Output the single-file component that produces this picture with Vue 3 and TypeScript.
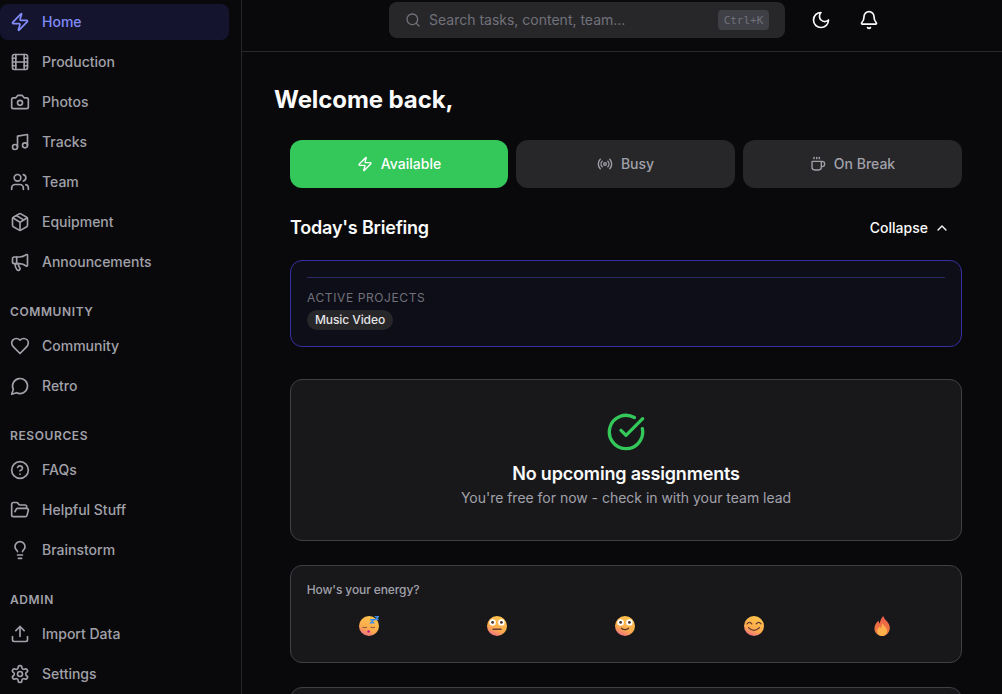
<script setup lang="ts">
import { h } from 'vue'

const circle = (cx: number, cy: number, r: number) =>
  `M${cx - r} ${cy}a${r} ${r} 0 1 0 ${r * 2} 0a${r} ${r} 0 1 0 ${-r * 2} 0z`

const paths: Record<string, string[]> = {
  zap: ['M4 14a1 1 0 0 1-.78-1.63l9.9-10.2a.5.5 0 0 1 .86.46l-1.92 6.02A1 1 0 0 0 13 10h7a1 1 0 0 1 .78 1.63l-9.9 10.2a.5.5 0 0 1-.86-.46l1.92-6.02A1 1 0 0 0 11 14z'],
  film: ['M5 3h14a2 2 0 0 1 2 2v14a2 2 0 0 1-2 2H5a2 2 0 0 1-2-2V5a2 2 0 0 1 2-2z', 'M7 3v18', 'M3 7.5h4', 'M3 12h18', 'M3 16.5h4', 'M17 3v18', 'M17 7.5h4', 'M17 16.5h4'],
  camera: ['M14.5 4h-5L7 7H4a2 2 0 0 0-2 2v9a2 2 0 0 0 2 2h16a2 2 0 0 0 2-2V9a2 2 0 0 0-2-2h-3l-2.5-3z', circle(12, 13, 3)],
  music: ['M9 18V5l12-2v13', circle(6, 18, 3), circle(18, 16, 3)],
  users: ['M16 21v-2a4 4 0 0 0-4-4H6a4 4 0 0 0-4 4v2', circle(9, 7, 4), 'M22 21v-2a4 4 0 0 0-3-3.87', 'M16 3.13a4 4 0 0 1 0 7.75'],
  box: ['M11 21.73a2 2 0 0 0 2 0l7-4A2 2 0 0 0 21 16V8a2 2 0 0 0-1-1.73l-7-4a2 2 0 0 0-2 0l-7 4A2 2 0 0 0 3 8v8a2 2 0 0 0 1 1.73z', 'M12 22V12', 'm3.3 7 7.703 4.734a2 2 0 0 0 1.994 0L20.7 7', 'm7.5 4.27 9 5.15'],
  megaphone: ['M11 6a13 13 0 0 0 8.4-2.8A1 1 0 0 1 21 4v12a1 1 0 0 1-1.6.8A13 13 0 0 0 11 14H5a2 2 0 0 1-2-2V8a2 2 0 0 1 2-2z', 'M6 14a12 12 0 0 0 2.4 7.2 2 2 0 0 0 3.2-2.4A8 8 0 0 1 10 14', 'M8 6v8'],
  heart: ['M19 14c1.49-1.46 3-3.21 3-5.5A5.5 5.5 0 0 0 16.5 3c-1.76 0-3 .5-4.5 2-1.5-1.5-2.74-2-4.5-2A5.5 5.5 0 0 0 2 8.5c0 2.3 1.5 4.05 3 5.5l7 7Z'],
  message: ['M7.9 20A9 9 0 1 0 4 16.1L2 22Z'],
  help: [circle(12, 12, 10), 'M9.09 9a3 3 0 0 1 5.83 1c0 2-3 3-3 3', 'M12 17h.01'],
  folder: ['m6 14 1.5-2.9A2 2 0 0 1 9.24 10H20a2 2 0 0 1 1.94 2.5l-1.54 6a2 2 0 0 1-1.95 1.5H4a2 2 0 0 1-2-2V5a2 2 0 0 1 2-2h3.9a2 2 0 0 1 1.69.9l.81 1.2a2 2 0 0 0 1.67.9H18a2 2 0 0 1 2 2v2'],
  bulb: ['M15 14c.2-1 .7-1.7 1.5-2.5 1-.9 1.5-2.2 1.5-3.5A6 6 0 0 0 6 8c0 1 .2 2.2 1.5 3.5.7.7 1.3 1.5 1.5 2.5', 'M9 18h6', 'M10 22h4'],
  upload: ['M21 15v4a2 2 0 0 1-2 2H5a2 2 0 0 1-2-2v-4', 'M17 8l-5-5-5 5', 'M12 3v12'],
  settings: ['M12.22 2h-.44a2 2 0 0 0-2 2v.18a2 2 0 0 1-1 1.73l-.43.25a2 2 0 0 1-2 0l-.15-.08a2 2 0 0 0-2.73.73l-.22.38a2 2 0 0 0 .73 2.73l.15.1a2 2 0 0 1 1 1.72v.51a2 2 0 0 1-1 1.74l-.15.09a2 2 0 0 0-.73 2.73l.22.38a2 2 0 0 0 2.73.73l.15-.08a2 2 0 0 1 2 0l.43.25a2 2 0 0 1 1 1.73V20a2 2 0 0 0 2 2h.44a2 2 0 0 0 2-2v-.18a2 2 0 0 1 1-1.73l.43-.25a2 2 0 0 1 2 0l.15.08a2 2 0 0 0 2.73-.73l.22-.39a2 2 0 0 0-.73-2.73l-.15-.08a2 2 0 0 1-1-1.74v-.5a2 2 0 0 1 1-1.74l.15-.09a2 2 0 0 0 .73-2.73l-.22-.38a2 2 0 0 0-2.73-.73l-.15.08a2 2 0 0 1-2 0l-.43-.25a2 2 0 0 1-1-1.73V4a2 2 0 0 0-2-2z', circle(12, 12, 3)],
  search: [circle(11, 11, 8), 'm21 21-4.3-4.3'],
  moon: ['M12 3a6 6 0 0 0 9 9 9 9 0 1 1-9-9Z'],
  bell: ['M10.268 21a2 2 0 0 0 3.464 0', 'M3.262 15.326A1 1 0 0 0 4 17h16a1 1 0 0 0 .74-1.673C19.41 13.956 18 12.499 18 8A6 6 0 0 0 6 8c0 4.499-1.411 5.956-2.738 7.326'],
  radio: ['M4.9 19.1C1 15.2 1 8.8 4.9 4.9', 'M7.8 16.2c-2.3-2.3-2.3-6.1 0-8.5', circle(12, 12, 2), 'M16.2 7.8c2.3 2.3 2.3 6.1 0 8.5', 'M19.1 4.9C23 8.8 23 15.1 19.1 19'],
  coffee: ['M10 2v2', 'M14 2v2', 'M16 8a1 1 0 0 1 1 1v8a4 4 0 0 1-4 4H7a4 4 0 0 1-4-4V9a1 1 0 0 1 1-1h14a4 4 0 1 1 0 8h-1', 'M6 2v2'],
  chevron: ['m18 15-6-6-6 6'],
  check: ['M21.801 10A10 10 0 1 1 17 3.335', 'm9 11 3 3L22 4'],
}

const Icon = (props: { name: string; size?: number }) =>
  h(
    'svg',
    {
      width: props.size ?? 20,
      height: props.size ?? 20,
      viewBox: '0 0 24 24',
      fill: 'none',
      stroke: 'currentColor',
      'stroke-width': 2,
      'stroke-linecap': 'round',
      'stroke-linejoin': 'round',
      style: 'flex:none;display:block',
    },
    paths[props.name].map((d) => h('path', { d })),
  )
Icon.props = ['name', 'size']

const groups = [
  {
    label: '',
    items: [
      { name: 'Home', icon: 'zap', active: true },
      { name: 'Production', icon: 'film' },
      { name: 'Photos', icon: 'camera' },
      { name: 'Tracks', icon: 'music' },
      { name: 'Team', icon: 'users' },
      { name: 'Equipment', icon: 'box' },
      { name: 'Announcements', icon: 'megaphone' },
    ],
  },
  {
    label: 'Community',
    items: [
      { name: 'Community', icon: 'heart' },
      { name: 'Retro', icon: 'message' },
    ],
  },
  {
    label: 'Resources',
    items: [
      { name: 'FAQs', icon: 'help' },
      { name: 'Helpful Stuff', icon: 'folder' },
      { name: 'Brainstorm', icon: 'bulb' },
    ],
  },
  {
    label: 'Admin',
    items: [
      { name: 'Import Data', icon: 'upload' },
      { name: 'Settings', icon: 'settings' },
    ],
  },
]

const statuses = [
  { name: 'Available', icon: 'zap', on: true },
  { name: 'Busy', icon: 'radio' },
  { name: 'On Break', icon: 'coffee' },
]
</script>

<template>
  <div class="app">
    <aside class="sidebar">
      <section v-for="(g, i) in groups" :key="i" class="group">
        <h3 v-if="g.label" class="group-label">{{ g.label }}</h3>
        <a v-for="it in g.items" :key="it.name" class="nav-item" :class="{ active: it.active }">
          <Icon :name="it.icon" />
          <span>{{ it.name }}</span>
        </a>
      </section>
    </aside>

    <div class="right">
      <header class="topbar">
        <div class="search">
          <Icon name="search" :size="16" class="search-icon" />
          <span class="search-text">Search tasks, content, team...</span>
          <kbd class="kbd">Ctrl+K</kbd>
        </div>
        <button class="icon-btn"><Icon name="moon" /></button>
        <button class="icon-btn"><Icon name="bell" /></button>
      </header>

      <main class="main">
        <h1 class="welcome">Welcome back,</h1>
        <div class="inner">
          <div class="statuses">
            <button v-for="s in statuses" :key="s.name" class="status" :class="{ on: s.on }">
              <Icon :name="s.icon" :size="16" />
              <span>{{ s.name }}</span>
            </button>
          </div>

          <div class="brief-head">
            <h2 class="brief-title">Today's Briefing</h2>
            <button class="collapse">
              <span>Collapse</span>
              <Icon name="chevron" :size="16" />
            </button>
          </div>

          <div class="brief-card">
            <div class="brief-rule"></div>
            <div class="brief-label">ACTIVE PROJECTS</div>
            <span class="chip">Music Video</span>
          </div>

          <div class="card empty">
            <Icon name="check" :size="40" class="empty-icon" />
            <h3 class="empty-title">No upcoming assignments</h3>
            <p class="empty-sub">You're free for now - check in with your team lead</p>
          </div>

          <div class="card energy">
            <div class="energy-label">How's your energy?</div>
            <div class="emojis">
              <svg class="emoji" viewBox="0 0 20 20" aria-label="sleepy">
                <defs>
                  <linearGradient id="face" x1="0.7" y1="0" x2="0.25" y2="1">
                    <stop offset="0" stop-color="#ffc54c" />
                    <stop offset="0.65" stop-color="#fca94e" />
                    <stop offset="1" stop-color="#ec6a86" />
                  </linearGradient>
                  <linearGradient id="fire" x1="0.5" y1="0" x2="0.5" y2="1">
                    <stop offset="0" stop-color="#ee5a4a" />
                    <stop offset="1" stop-color="#f0843e" />
                  </linearGradient>
                </defs>
                <circle cx="10" cy="10" r="10" fill="url(#face)" />
                <path d="M3.400 11.200q2.400.9 4.600 0M11.400 11.200q2.400.9 4.600 0" stroke="#7a4c3c" stroke-width=".9" fill="none" />
                <circle cx="9.600" cy="15.500" r="1.300" fill="#c2188a" />
                <path d="M11 3.800h3.800l-3 3h3.600M15.600 .4h4l-3 3.200h3" stroke="#3f8ee8" stroke-width="1.500" fill="none" />
              </svg>
              <svg class="emoji" viewBox="0 0 20 20" aria-label="flat">
                <circle cx="10" cy="10" r="10" fill="url(#face)" />
                <circle cx="5.600" cy="6.400" r="3.200" fill="#fff" />
                <circle cx="14.400" cy="6.400" r="3.200" fill="#fff" />
                <circle cx="5.600" cy="6.400" r="1.400" fill="#4a3028" />
                <circle cx="14.400" cy="6.400" r="1.400" fill="#4a3028" />
                <rect x="5.400" y="12.400" width="9.200" height="1.600" rx=".6" fill="#6b4238" />
              </svg>
              <svg class="emoji" viewBox="0 0 20 20" aria-label="okay">
                <circle cx="10" cy="10" r="10" fill="url(#face)" />
                <circle cx="5.600" cy="6.400" r="3.200" fill="#fff" />
                <circle cx="14.400" cy="6.400" r="3.200" fill="#fff" />
                <circle cx="5.600" cy="6.400" r="1.400" fill="#4a3028" />
                <circle cx="14.400" cy="6.400" r="1.400" fill="#4a3028" />
                <path d="M6.400 12.200q3.600 3 7.200 0" stroke="#5a382e" stroke-width="1.300" fill="none" stroke-linecap="round" />
              </svg>
              <svg class="emoji" viewBox="0 0 20 20" aria-label="smiling">
                <circle cx="10" cy="10" r="10" fill="url(#face)" />
                <path d="M3 7.800q2.400-3 4.800 0M12.200 7.800q2.400-3 4.800 0" stroke="#5a382e" stroke-width="1.200" fill="none" stroke-linecap="round" />
                <path d="M4.600 11.600q5.400 5.600 10.800 0" stroke="#5a382e" stroke-width="1.300" fill="none" stroke-linecap="round" />
              </svg>
              <svg class="emoji" viewBox="0 0 20 20" aria-label="fire">
                <path d="M11.400 0c.4 3 3.600 4.800 5.400 8 1.800 3.400 1 7.400-1.400 9.800-1.400 1.400-3.400 2.200-5.400 2.200s-4.200-.8-5.600-2.400C2.200 15.200 2 11.800 3.200 9c.8-1.800 2-3.400 3.600-4.600-.2 1.400.2 2.400 1 3.200 .4-3 1.400-5.600 3.600-7.600z" fill="url(#fire)" />
                <path d="M10.800 7.400c.6 2.200 4.200 3.800 4.200 7.800 0 2.800-2.200 4.800-5 4.800s-4.800-2-4.800-4.600c0-2.400 1.600-3.600 2.800-4.800.2 1 .6 1.400 1.200 1.800 0-1.800.4-3.400 1.600-5z" fill="#fdb04c" />
              </svg>
            </div>
          </div>

          <div class="card next"></div>
        </div>
      </main>
    </div>
  </div>
</template>

<style>
html,
body {
  margin: 0;
  background: #09090b;
}
</style>

<style scoped>
.app {
  display: flex;
  height: 694px;
  overflow: hidden;
  background: #09090b;
  color: #fafafa;
  font-family: Inter, "Liberation Sans", sans-serif;
}
.sidebar {
  width: 241px;
  flex: none;
  box-sizing: border-box;
  padding: 4px 12px 0 0;
  display: flex;
  flex-direction: column;
  gap: 24px;
}
.group {
  display: flex;
  flex-direction: column;
  gap: 4px;
}
.group-label {
  margin: 0 0 4px 10px;
  font-size: 12px;
  line-height: 16px;
  font-weight: 600;
  letter-spacing: 0.6px;
  text-transform: uppercase;
  color: #a1a1aa;
}
.nav-item {
  height: 36px;
  display: flex;
  align-items: center;
  gap: 12px;
  padding-left: 10px;
  border-radius: 8px;
  font-size: 14px;
  line-height: 20px;
  font-weight: 500;
  color: #a1a1aa;
}
.nav-item.active {
  background: #14142f;
  color: #818cf8;
}
.right {
  flex: 1;
  min-width: 0;
  border-left: 1px solid #27272a;
  display: flex;
  flex-direction: column;
}
.topbar {
  height: 52px;
  flex: none;
  box-sizing: border-box;
  border-bottom: 1px solid #27272a;
  padding: 2px 0 0 147px;
  display: flex;
  align-items: flex-start;
  gap: 12px;
}
.search {
  width: 396px;
  height: 36px;
  flex: none;
  box-sizing: border-box;
  margin-right: 6px;
  padding: 0 16px;
  display: flex;
  align-items: center;
  gap: 8px;
  background: #27272a;
  border-radius: 8px;
}
.search-icon {
  color: #71717a;
}
.search-text {
  flex: 1;
  font-size: 14px;
  line-height: 20px;
  color: #71717a;
}
.kbd {
  width: 51px;
  height: 20px;
  display: flex;
  align-items: center;
  justify-content: center;
  background: #3f3f46;
  border-radius: 4px;
  font-family: "DejaVu Sans Mono", monospace;
  font-size: 11px;
  color: #71717a;
}
.icon-btn {
  width: 36px;
  height: 36px;
  padding: 0;
  display: flex;
  align-items: center;
  justify-content: center;
  background: none;
  border: 0;
  color: #fafafa;
}
.main {
  padding: 32px 40px 0 32px;
}
.welcome {
  margin: 0 0 24px;
  font-size: 24px;
  line-height: 32px;
  font-weight: 700;
  letter-spacing: -0.08px;
  color: #fafafa;
}
.inner {
  padding-left: 16px;
}
.statuses {
  display: grid;
  grid-template-columns: 218px 219px 1fr;
  gap: 8px;
}
.status {
  height: 48px;
  display: flex;
  align-items: center;
  justify-content: center;
  gap: 8px;
  background: #27272a;
  border: 0;
  border-radius: 12px;
  font-family: inherit;
  font-size: 14px;
  line-height: 20px;
  font-weight: 500;
  color: #a1a1aa;
}
.status.on {
  background: #34c759;
  color: #fff;
}
.brief-head {
  height: 28px;
  margin: 26px 0 18px;
  display: flex;
  align-items: center;
  justify-content: space-between;
}
.brief-title {
  margin: 0;
  font-size: 18px;
  line-height: 28px;
  font-weight: 600;
  letter-spacing: -0.2px;
  color: #fafafa;
}
.collapse {
  display: flex;
  align-items: center;
  gap: 6px;
  padding: 0 12px 0 0;
  background: none;
  border: 0;
  font-family: inherit;
  font-size: 14px;
  line-height: 20px;
  font-weight: 500;
  color: #fafafa;
}
.brief-card {
  box-sizing: border-box;
  height: 87px;
  padding: 16px;
  background: #0e0e18;
  border: 1px solid #3730a3;
  border-radius: 12px;
}
.brief-rule {
  height: 1px;
  background: #2b2a66;
  margin-bottom: 12px;
}
.brief-label {
  font-size: 12px;
  line-height: 16px;
  letter-spacing: 0.6px;
  color: #71717a;
  margin-bottom: 2px;
}
.chip {
  display: inline-block;
  height: 20px;
  box-sizing: border-box;
  padding: 0 8px;
  background: #27272a;
  border-radius: 999px;
  font-size: 12px;
  line-height: 20px;
  font-weight: 500;
  letter-spacing: -0.09px;
  color: #e4e4e7;
}
.card {
  box-sizing: border-box;
  margin-top: 32px;
  background: #18181b;
  border: 1px solid #3f3f46;
  border-radius: 12px;
}
.empty {
  height: 162px;
  padding-top: 32px;
  display: flex;
  flex-direction: column;
  align-items: center;
}
.empty-icon {
  color: #34c759;
}
.empty-title {
  margin: 8px 0 0;
  font-size: 18px;
  line-height: 28px;
  font-weight: 600;
  letter-spacing: -0.18px;
  color: #fafafa;
}
.empty-sub {
  margin: 0;
  font-size: 14px;
  line-height: 20px;
  letter-spacing: -0.02px;
  color: #a1a1aa;
}
.energy {
  margin-top: 24px;
  height: 98px;
  padding: 16px;
}
.energy-label {
  margin-left: -0.3px;
  font-size: 12px;
  line-height: 16px;
  font-weight: 500;
  letter-spacing: -0.11px;
  color: #a1a1aa;
}
.emojis {
  margin: 18px -1.5px 0 -2.5px;
  display: grid;
  grid-template-columns: repeat(5, 1fr);
  justify-items: center;
}
.emoji {
  width: 20px;
  height: 20px;
  display: block;
}
.next {
  margin-top: 24px;
  height: 60px;
}
</style>
